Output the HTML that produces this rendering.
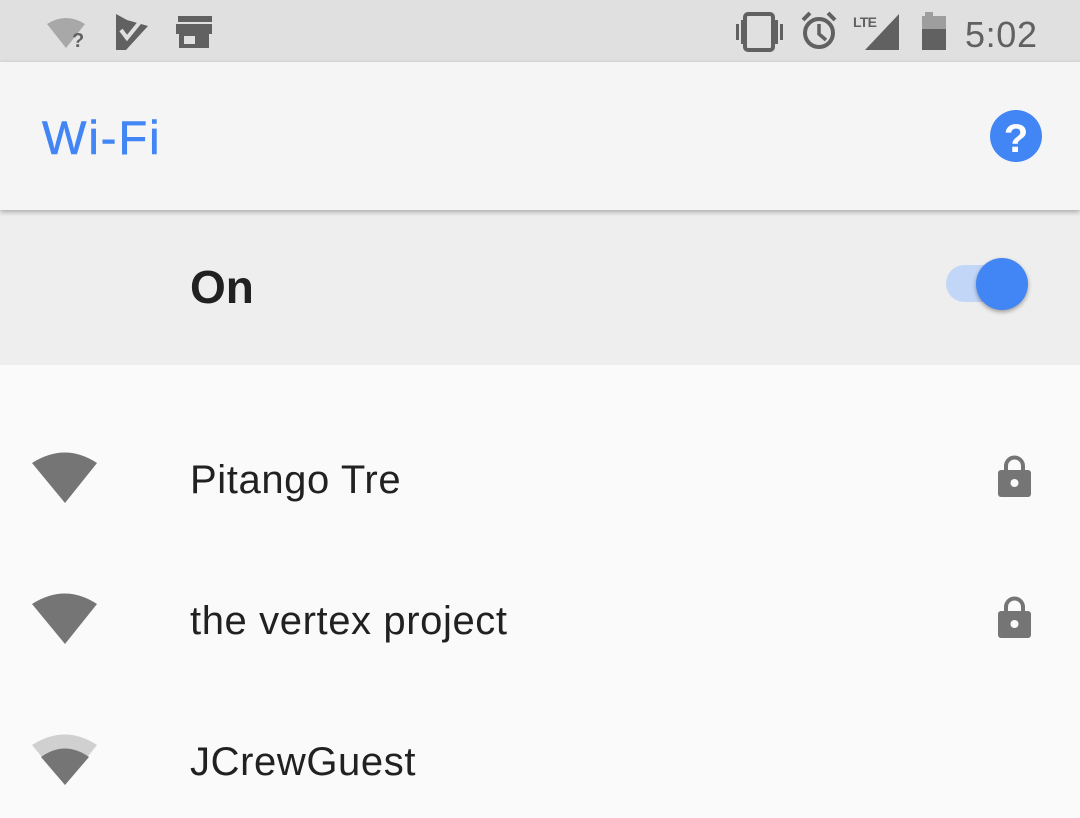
<!DOCTYPE html>
<html><head><meta charset="utf-8"><style>
*{margin:0;padding:0;box-sizing:border-box}
body{width:1080px;height:818px;overflow:hidden;background:#fafafa;font-family:"Liberation Sans",sans-serif;position:relative}
.abs{position:absolute}
.sb{left:0;top:0;width:1080px;height:62px;background:#e0e0e0}
.hd{left:0;top:62px;width:1080px;height:148px;background:#f5f5f5;box-shadow:0 2px 5px rgba(0,0,0,.3);z-index:2}
.on{left:0;top:210px;width:1080px;height:155px;background:#eeeeee}
.t{color:#212121;font-size:40px;letter-spacing:0.6px}
</style></head><body>
<div class="abs sb">
<svg class="abs" style="left:0;top:0" width="1080" height="62">
<path d="M47 24 Q66 12 85 24 L66 48 Z" fill="#a8a8a8"/>
<text x="72" y="47" font-family="Liberation Sans" font-size="20" font-weight="bold" fill="#616161">?</text>
<path d="M116 14 L127 20 L148 26 L126 50 L116 50 Z" fill="#616161"/>
<path d="M121 30 L127 38 L140 22" stroke="#e0e0e0" stroke-width="4" fill="none"/>
<rect x="178" y="16" width="34" height="6" fill="#616161"/>
<rect x="176" y="24" width="36" height="10" fill="#616161"/>
<rect x="179" y="34" width="30" height="14" fill="#616161"/>
<rect x="184" y="36" width="11" height="8" fill="#e0e0e0"/>
<rect x="745" y="14" width="28" height="36" rx="3" fill="none" stroke="#616161" stroke-width="4"/>
<rect x="736" y="24" width="3" height="16" fill="#616161"/><rect x="741" y="20" width="3" height="24" fill="#616161"/>
<rect x="775" y="20" width="3" height="24" fill="#616161"/><rect x="780" y="24" width="3" height="16" fill="#616161"/>
<circle cx="819" cy="33" r="14" fill="none" stroke="#616161" stroke-width="4"/>
<path d="M819 24 V34 L826 40" stroke="#616161" stroke-width="3.5" fill="none"/>
<path d="M803 20 L810 13 M835 20 L828 13" stroke="#616161" stroke-width="4"/>
<text x="853" y="27" font-family="Liberation Sans" font-size="14" font-weight="bold" fill="#616161" textLength="24">LTE</text>
<path d="M899 14 V50 H865 Z" fill="#616161"/>
<rect x="925" y="12" width="8" height="5" fill="#9e9e9e"/>
<rect x="922" y="16" width="24" height="34" fill="#9e9e9e"/>
<rect x="922" y="29" width="24" height="21" fill="#616161"/>
<text x="965" y="47" font-family="Liberation Sans" font-size="36" fill="#616161" textLength="72">5:02</text>
</svg></div>
<div class="abs hd">
<div class="abs" style="left:42px;top:48px;font-size:47px;color:#4285f4;letter-spacing:2px;-webkit-text-stroke:0.6px #4285f4">Wi-Fi</div>
<svg class="abs" style="left:990px;top:48px" width="54" height="54"><circle cx="26" cy="26" r="26" fill="#4285f4"/><text x="26" y="42" text-anchor="middle" font-family="Liberation Sans" font-weight="bold" font-size="40" fill="#fff">?</text></svg>
</div>
<div class="abs on">
<div class="abs" style="left:190px;top:50px;font-size:46px;font-weight:bold;color:#212121">On</div>
<div class="abs" style="left:946px;top:55px;width:60px;height:37px;border-radius:19px;background:#c2d6f7"></div>
<div class="abs" style="left:976px;top:48px;width:52px;height:52px;border-radius:50%;background:#4285f4;box-shadow:0 2px 4px rgba(0,0,0,.35)"></div>
</div>
<svg class="abs" style="left:0;top:440px" width="120" height="360">
<path d="M32 23 Q65 2 97 23 L65 63 Z" fill="#757575"/>
<path d="M32 164 Q65 143 97 164 L65 204 Z" fill="#757575"/>
<path d="M32 305 Q65 284 97 305 L65 345 Z" fill="#d0d0d0"/>
<path d="M41 317 Q65 300 89 317 L65 345 Z" fill="#757575"/>
</svg>
<div class="abs t" style="left:190px;top:458px">Pitango Tre</div>
<div class="abs t" style="left:190px;top:599px">the vertex project</div>
<div class="abs t" style="left:190px;top:740px">JCrewGuest</div>
<svg class="abs" style="left:990px;top:450px" width="50" height="200">
<path d="M16 22 V16 A8.5 8.5 0 0 1 33 16 V22" stroke="#757575" stroke-width="4" fill="none"/>
<rect x="8" y="20" width="33" height="27" rx="3" fill="#757575"/><circle cx="24.5" cy="33" r="4" fill="#fafafa"/>
<path d="M16 163 V157 A8.5 8.5 0 0 1 33 157 V163" stroke="#757575" stroke-width="4" fill="none"/>
<rect x="8" y="161" width="33" height="27" rx="3" fill="#757575"/><circle cx="24.5" cy="174" r="4" fill="#fafafa"/>
</svg>
</body></html>
